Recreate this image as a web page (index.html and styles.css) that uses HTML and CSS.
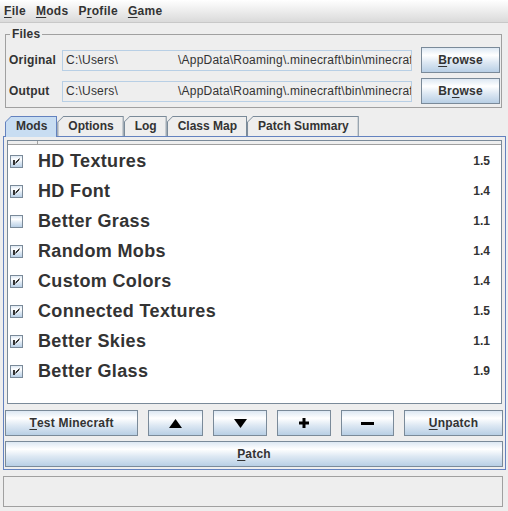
FILE: index.html
```html
<!DOCTYPE html>
<html>
<head>
<meta charset="utf-8">
<link rel="stylesheet" href="styles.css">
</head>
<body>
<div class="menubar">
  <span class="menu"><u>F</u>ile</span>
  <span class="menu"><u>M</u>ods</span>
  <span class="menu">P<u>r</u>ofile</span>
  <span class="menu"><u>G</u>ame</span>
</div>

<fieldset class="files">
  <legend>Files</legend>
  <div class="file-row">
    <span class="label">Original</span>
    <div class="field"><span>C:\Users\</span><span class="path">\AppData\Roaming\.minecraft\bin\minecraf</span></div>
    <button class="btn"><u>B</u>rowse</button>
  </div>
  <div class="file-row">
    <span class="label">Output</span>
    <div class="field"><span>C:\Users\</span><span class="path">\AppData\Roaming\.minecraft\bin\minecraf</span></div>
    <button class="btn">Br<u>o</u>wse</button>
  </div>
</fieldset>

<div class="tabs">
  <div class="tab selected"><span class="tab-in">Mods</span></div>
  <div class="tab"><span class="tab-in">Options</span></div>
  <div class="tab"><span class="tab-in">Log</span></div>
  <div class="tab"><span class="tab-in">Class Map</span></div>
  <div class="tab"><span class="tab-in">Patch Summary</span></div>
</div>

<div class="tabpanel">
  <div class="table">
    <div class="thead"><span class="hcol"></span></div>
    <div class="tbody">
      <div class="trow"><span class="cb"><svg viewBox="0 0 11 11" width="11" height="11"><rect x="2" y="4" width="2" height="5" fill="#333"/><path d="M8.5 2.5 L4.5 6.5 M8.5 3.5 L4.5 7.5" stroke="#333" stroke-width="1" fill="none"/></svg></span><span class="name">HD Textures</span><span class="ver">1.5</span></div>
      <div class="trow"><span class="cb"><svg viewBox="0 0 11 11" width="11" height="11"><rect x="2" y="4" width="2" height="5" fill="#333"/><path d="M8.5 2.5 L4.5 6.5 M8.5 3.5 L4.5 7.5" stroke="#333" stroke-width="1" fill="none"/></svg></span><span class="name">HD Font</span><span class="ver">1.4</span></div>
      <div class="trow"><span class="cb"></span><span class="name">Better Grass</span><span class="ver">1.1</span></div>
      <div class="trow"><span class="cb"><svg viewBox="0 0 11 11" width="11" height="11"><rect x="2" y="4" width="2" height="5" fill="#333"/><path d="M8.5 2.5 L4.5 6.5 M8.5 3.5 L4.5 7.5" stroke="#333" stroke-width="1" fill="none"/></svg></span><span class="name">Random Mobs</span><span class="ver">1.4</span></div>
      <div class="trow"><span class="cb"><svg viewBox="0 0 11 11" width="11" height="11"><rect x="2" y="4" width="2" height="5" fill="#333"/><path d="M8.5 2.5 L4.5 6.5 M8.5 3.5 L4.5 7.5" stroke="#333" stroke-width="1" fill="none"/></svg></span><span class="name">Custom Colors</span><span class="ver">1.4</span></div>
      <div class="trow"><span class="cb"><svg viewBox="0 0 11 11" width="11" height="11"><rect x="2" y="4" width="2" height="5" fill="#333"/><path d="M8.5 2.5 L4.5 6.5 M8.5 3.5 L4.5 7.5" stroke="#333" stroke-width="1" fill="none"/></svg></span><span class="name">Connected Textures</span><span class="ver">1.5</span></div>
      <div class="trow"><span class="cb"><svg viewBox="0 0 11 11" width="11" height="11"><rect x="2" y="4" width="2" height="5" fill="#333"/><path d="M8.5 2.5 L4.5 6.5 M8.5 3.5 L4.5 7.5" stroke="#333" stroke-width="1" fill="none"/></svg></span><span class="name">Better Skies</span><span class="ver">1.1</span></div>
      <div class="trow"><span class="cb"><svg viewBox="0 0 11 11" width="11" height="11"><rect x="2" y="4" width="2" height="5" fill="#333"/><path d="M8.5 2.5 L4.5 6.5 M8.5 3.5 L4.5 7.5" stroke="#333" stroke-width="1" fill="none"/></svg></span><span class="name">Better Glass</span><span class="ver">1.9</span></div>
    </div>
  </div>

  <div class="actions">
    <button class="btn"><u>T</u>est Minecraft</button>
    <button class="btn"><svg width="13" height="9" viewBox="0 0 13 9"><polygon points="6.5,0 13,9 0,9" fill="#000"/></svg></button>
    <button class="btn"><svg width="13" height="9" viewBox="0 0 13 9"><polygon points="0,0 13,0 6.5,9" fill="#000"/></svg></button>
    <button class="btn"><svg width="10" height="10" viewBox="0 0 10 10"><rect x="3.5" y="0" width="3" height="10" fill="#000"/><rect x="0" y="3.5" width="10" height="3" fill="#000"/></svg></button>
    <button class="btn"><svg width="13" height="3" viewBox="0 0 13 3"><rect x="0" y="0" width="13" height="3" fill="#000"/></svg></button>
    <button class="btn"><u>U</u>npatch</button>
  </div>
  <button class="btn patch"><u>P</u>atch</button>
</div>

<div class="status"></div>
</body>
</html>
```

FILE: styles.css
```css
html, body {
  margin: 0;
  padding: 0;
}
body {
  width: 508px;
  height: 511px;
  background: #eeeeee;
  font-family: "Liberation Sans", Arial, sans-serif;
  font-size: 12px;
  font-weight: bold;
  color: #333333;
  overflow: hidden;
}
u {
  text-decoration: underline;
  text-underline-offset: 2px;
}

/* menu bar */
.menubar {
  height: 22px;
  background: linear-gradient(to bottom, #ffffff, #dadada);
  border-bottom: 1px solid #c8c8c8;
  display: flex;
  align-items: center;
}
.menu {
  padding: 0 6px 0 4px;
  line-height: 22px;
  letter-spacing: 0.3px;
}

/* files group */
.files {
  margin: 4px 6px 0 5px;
  padding: 6px 1px 3px 3px;
  border: 1px solid #a0a0a0;
  min-width: 0;
}
.files legend {
  padding: 0 2px;
  margin-left: 1px;
  line-height: 14px;
  font-size: 12px;
  letter-spacing: 0.2px;
}
.file-row {
  display: grid;
  grid-template-columns: 53px 350px 88px;
  align-items: center;
  height: 26px;
}
.file-row + .file-row {
  margin-top: 5px;
}
.file-row .btn {
  margin-left: 9px;
  width: 79px;
}
.label {
  white-space: nowrap;
  letter-spacing: 0.2px;
}
.field {
  height: 21px;
  box-sizing: border-box;
  border: 1px solid #b8cfe5;
  background: #eeeeee;
  font-weight: normal;
  line-height: 19px;
  padding-left: 3px;
  white-space: nowrap;
  overflow: hidden;
  letter-spacing: 0.22px;
}
.field .path {
  margin-left: 60px;
}

/* buttons */
.btn {
  display: flex;
  align-items: center;
  justify-content: center;
  height: 26px;
  box-sizing: border-box;
  margin: 0;
  padding: 0;
  border: 1px solid #7a8a99;
  border-radius: 0;
  background: linear-gradient(to bottom, #dde8f3 0%, #ffffff 30%, #dde8f3 60%, #b8cfe5 100%);
  font-family: "Liberation Sans", Arial, sans-serif;
  font-size: 12px;
  font-weight: bold;
  color: #333333;
  letter-spacing: 0.2px;
}

/* tabs */
.tabs {
  display: flex;
  align-items: flex-end;
  margin: 8px 0 0 5px;
  height: 20px;
  position: relative;
  z-index: 1;
}
.tab {
  height: 20px;
  box-sizing: border-box;
  padding: 1px 1px 0 1px;
  background: #7a8a99;
  clip-path: polygon(0 6px, 6px 0, 100% 0, 100% 100%, 0 100%);
}
.tab-in {
  display: block;
  height: 100%;
  background: #eeeeee;
  clip-path: polygon(0 5px, 5px 0, 100% 0, 100% 100%, 0 100%);
  padding: 0 9px 0 10px;
  line-height: 18px;
}
.tab.selected {
  height: 21px;
  margin-bottom: -1px;
  background: #6382bf;
}
.tab.selected .tab-in {
  background: #c8ddf2;
}

.tabpanel {
  margin: 0 2px 0 3px;
  border: 1px solid #6382bf;
  background: #eeeeee;
  padding: 3px 2px 2px 1px;
  height: 334px;
  box-sizing: border-box;
}

/* mod table */
.table {
  margin: 0 1px 0 2px;
  height: 264px;
  box-sizing: border-box;
  border: 1px solid #7a8a99;
  background: #ffffff;
}
.thead {
  height: 3px;
  border-bottom: 1px solid #a0a0a0;
  background: #eeeeee;
  display: flex;
}
.hcol {
  width: 29px;
  border-right: 1px solid #a0a0a0;
}
.tbody {
  padding-top: 1px;
}
.trow {
  height: 30px;
  display: flex;
  align-items: center;
}
.cb {
  width: 13px;
  height: 13px;
  box-sizing: border-box;
  margin-left: 2px;
  border: 1px solid #7a8a99;
  background: linear-gradient(to bottom, #dde8f3 0%, #ffffff 30%, #dde8f3 60%, #b8cfe5 100%);
  display: flex;
}
.name {
  margin-left: 15px;
  font-size: 18px;
  letter-spacing: 0.35px;
  flex: 1;
}
.ver {
  margin-right: 11px;
}

.actions {
  display: grid;
  grid-template-columns: 133px 55px 54px 54px 53px 1fr;
  column-gap: 10px;
  margin-top: 6px;
}
.patch {
  width: 100%;
  margin-top: 5px;
}

.status {
  margin: 6px 5px 0 3px;
  height: 31px;
  box-sizing: border-box;
  border: 1px solid #a0a0a0;
}
```
